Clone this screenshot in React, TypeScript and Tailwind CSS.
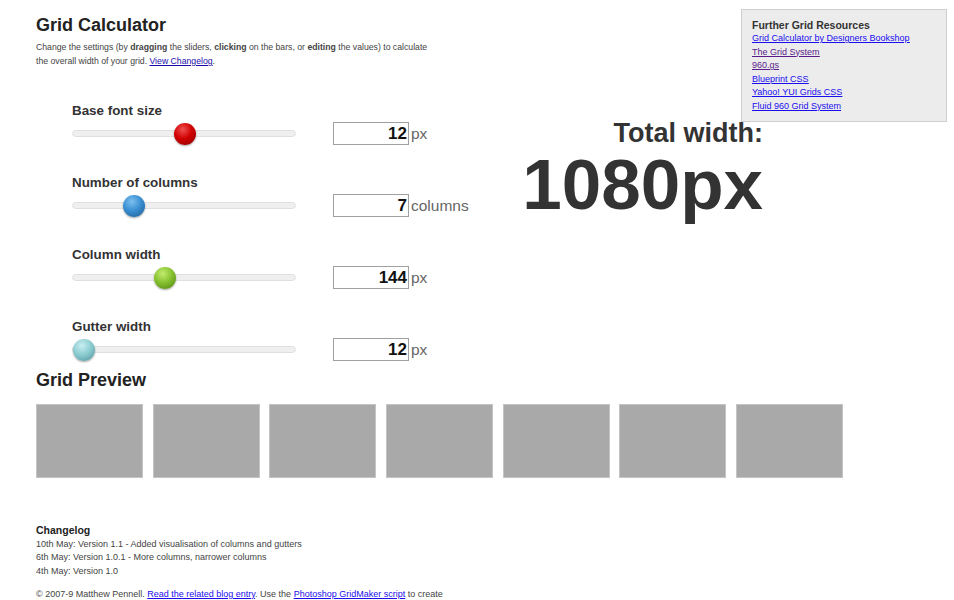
import React from "react";

const font = { fontFamily: '"Liberation Sans", Arial, Helvetica, sans-serif' };

type Row = { label: string; value: string; unit: string; pos: number; color: string };

const rows: Row[] = [
  { label: "Base font size", value: "12", unit: "px", pos: 112, color: "red" },
  { label: "Number of columns", value: "7", unit: "columns", pos: 61, color: "blue" },
  { label: "Column width", value: "144", unit: "px", pos: 92, color: "green" },
  { label: "Gutter width", value: "12", unit: "px", pos: 11, color: "cyan" },
];

function Thumb({ color }: { color: string }) {
  const cls =
    color === "red"
      ? "bg-[radial-gradient(circle_at_40%_30%,#f05050_0%,#d00000_45%,#8a0000_100%)]"
      : color === "blue"
      ? "bg-[radial-gradient(circle_at_40%_30%,#7cc0f0_0%,#3a8fd2_45%,#1d5a8e_100%)]"
      : color === "green"
      ? "bg-[radial-gradient(circle_at_40%_30%,#c4ec70_0%,#86c230_45%,#4f7d10_100%)]"
      : "bg-[radial-gradient(circle_at_40%_30%,#c8eef0_0%,#8ccdd2_45%,#4f9098_100%)]";
  return <div className={`h-[22px] w-[22px] rounded-full shadow-[0_1px_2px_rgba(0,0,0,0.35)] ${cls}`} />;
}

export default function App() {
  return (
    <div style={font} className="min-h-[600px] bg-white pl-[36px] pr-[7px] pt-[9px] text-[#333]">
      {/* Header */}
      <div className="flex items-start justify-between">
        <div className="mt-[4px]">
          <h1 className="text-[18px] font-bold leading-[24px] text-[#222]">Grid Calculator</h1>
          <p className="mt-[3px] text-[8.7px] leading-[14px] text-[#444]">
            Change the settings (by <b>dragging</b> the sliders, <b>clicking</b> on the bars, or <b>editing</b> the values) to calculate
            <br />
            the overall width of your grid. <a className="text-[#1a0dab] underline">View Changelog</a>.
          </p>
        </div>
        <div className="mb-[-70px] h-[113px] w-[206px] border border-[#cfcfcf] bg-[#ececec] pl-[10px] pt-[8px]">
          <div className="text-[10.5px] font-bold leading-[14px] text-[#333]">Further Grid Resources</div>
          <div className="flex flex-col text-[9px] leading-[13.5px] underline">
            <a className="text-[#1a0dee]">Grid Calculator by Designers Bookshop</a>
            <a className="text-[#5a1a8b]">The Grid System</a>
            <a className="text-[#5a1a8b]">960.gs</a>
            <a className="text-[#1a0dee]">Blueprint CSS</a>
            <a className="text-[#1a0dee]">Yahoo! YUI Grids CSS</a>
            <a className="text-[#1a0dee]">Fluid 960 Grid System</a>
          </div>
        </div>
      </div>

      {/* Sliders + total */}
      <div className="mt-[35px] flex">
        <div className="w-[436px] pl-[36px]">
          {rows.map((r, i) => (
            <div key={r.label} className={i < rows.length - 1 ? "mb-[30px]" : ""}>
              <div className="text-[13.4px] font-bold leading-[16px] text-[#333]">{r.label}</div>
              <div className="mt-[3px] flex h-[23px] items-center">
                <div className="relative h-[7px] w-[224px] rounded-full border border-[#e0e0e0] bg-[#efefef]">
                  <div className="absolute top-1/2 -translate-x-1/2 -translate-y-1/2" style={{ left: r.pos }}>
                    <Thumb color={r.color} />
                  </div>
                </div>
                <div className="ml-[37px] flex h-[23px] w-[76px] items-center justify-end border border-[#a0a0a0] bg-white pr-[1px] text-[17px] font-bold text-[#111]">
                  {r.value}
                </div>
                <span className="ml-[2px] text-[15.5px] text-[#666]">{r.unit}</span>
              </div>
            </div>
          ))}
        </div>
        <div className="mt-[16px] w-[291px] text-right text-[#333]">
          <div className="text-[27px] font-bold leading-[28px]">Total width:</div>
          <div className="mt-[4px] text-[71px] font-bold leading-[68px]">1080px</div>
        </div>
      </div>

      {/* Grid preview */}
      <h2 className="mt-[8px] text-[18px] font-bold leading-[22px] text-[#222]">Grid Preview</h2>
      <div className="mt-[13px] flex gap-[9.67px]">
        {Array.from({ length: 7 }).map((_, i) => (
          <div key={i} className="h-[74px] w-[107px] border border-[#c4c4c4] bg-[#a9a9a9]" />
        ))}
      </div>

      {/* Changelog */}
      <div className="mt-[46px] text-[9px] leading-[13.7px] text-[#444]">
        <div className="text-[10.5px] font-bold text-[#222]">Changelog</div>
        <div>10th May: Version 1.1 - Added visualisation of columns and gutters</div>
        <div>6th May: Version 1.0.1 - More columns, narrower columns</div>
        <div>4th May: Version 1.0</div>
      </div>
      <p className="mt-[9px] text-[9px] leading-[13.7px] text-[#444]">
        © 2007-9 Matthew Pennell. <a className="text-[#1a0dee] underline">Read the related blog entry</a>. Use the{" "}
        <a className="text-[#1a0dee] underline">Photoshop GridMaker script</a> to create
      </p>
    </div>
  );
}
